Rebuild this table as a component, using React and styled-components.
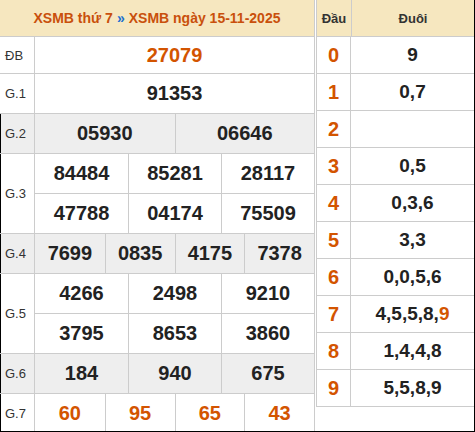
import React from "react";
import styled, { createGlobalStyle } from "styled-components";

const Global = createGlobalStyle`
  html, body { margin: 0; padding: 0; background: #fff; }
  body { font-family: "Liberation Sans", Arial, sans-serif; }
  * { box-sizing: border-box; }
`;

const ORANGE = "#d35400";
const LINE = "#cccccc";
const HEAD_BG = "#f6e7bf";

const Page = styled.div`
  display: flex;
  align-items: flex-start;
  gap: 1px;
  width: 475px;
  height: 432px;
  border-right: 1px solid #000;
  border-bottom: 1px solid #000;
  overflow: hidden;
`;

const Results = styled.div`
  width: 315px;
  display: flex;
  flex-direction: column;
  border-right: 1px solid ${LINE};
`;

const Title = styled.div`
  height: 37px;
  background: ${HEAD_BG};
  border-bottom: 1px solid ${LINE};
  display: flex;
  align-items: center;
  justify-content: center;
  font-weight: bold;
  font-size: 14px;
  color: #c9500c;
  white-space: nowrap;
`;

const Sep = styled.span`
  color: #1a6fd0;
  margin: 0 4px;
`;

const Prize = styled.div`
  display: flex;
  background: ${(p) => (p.$alt ? "#eeeeee" : "#fff")};
`;

const Label = styled.div`
  width: 35px;
  flex: none;
  display: flex;
  align-items: center;
  padding-left: 5px;
  font-size: 13px;
  color: #333;
  border-right: 1px solid ${LINE};
  border-bottom: 1px solid ${LINE};
  box-shadow: ${(p) => (p.$edge ? "inset 1px 0 0 #000" : "none")};
`;

const Lines = styled.div`
  flex: 1;
  display: flex;
  flex-direction: column;
`;

const Line = styled.div`
  display: grid;
  grid-template-columns: repeat(${(p) => p.$cols}, 1fr);
  height: ${(p) => p.$h}px;
`;

const Num = styled.div`
  display: flex;
  align-items: center;
  justify-content: center;
  font-weight: bold;
  font-size: 20px;
  color: ${(p) => (p.$hot ? ORANGE : "#222")};
  border-bottom: 1px solid ${LINE};
  & + & { border-left: 1px solid ${LINE}; }
`;

const Loto = styled.div`
  width: 158px;
  display: flex;
  flex-direction: column;
  border-left: 1px solid ${LINE};
`;

const LRow = styled.div`
  display: grid;
  grid-template-columns: 34px 1fr;
  height: 37px;
  border-bottom: 1px solid ${LINE};
  background: ${(p) => (p.$head ? HEAD_BG : "#fff")};
`;

const Head = styled.div`
  display: flex;
  align-items: center;
  justify-content: center;
  font-weight: bold;
  font-size: 13px;
  color: #333;
  & + & { border-left: 1px solid ${LINE}; }
`;

const Digit = styled.div`
  display: flex;
  align-items: center;
  justify-content: center;
  font-weight: bold;
  font-size: 20px;
  color: ${ORANGE};
  border-right: 1px solid ${LINE};
`;

const Tail = styled.div`
  display: flex;
  align-items: center;
  justify-content: center;
  font-weight: bold;
  font-size: 19px;
  color: #222;
`;

const Hot = styled.span`
  color: ${ORANGE};
`;

const prizes = [
  { label: "ĐB", rows: [["27079"]], h: 37, hot: true },
  { label: "G.1", rows: [["91353"]] },
  { label: "G.2", rows: [["05930", "06646"]], alt: true, edge: true },
  { label: "G.3", rows: [["84484", "85281", "28117"], ["47788", "04174", "75509"]], edge: true },
  { label: "G.4", rows: [["7699", "0835", "4175", "7378"]], alt: true, edge: true },
  { label: "G.5", rows: [["4266", "2498", "9210"], ["3795", "8653", "3860"]], edge: true },
  { label: "G.6", rows: [["184", "940", "675"]], alt: true, edge: true },
  { label: "G.7", rows: [["60", "95", "65", "43"]], hot: true, edge: true },
];

const loto = [
  ["0", "9"],
  ["1", "0,7"],
  ["2", ""],
  ["3", "0,5"],
  ["4", "0,3,6"],
  ["5", "3,3"],
  ["6", "0,0,5,6"],
  ["7", "4,5,5,8,", "9"],
  ["8", "1,4,4,8"],
  ["9", "5,5,8,9"],
];

export default function App() {
  return (
    <>
      <Global />
      <Page>
        <Results>
          <Title>
            XSMB thứ 7<Sep>»</Sep>XSMB ngày 15-11-2025
          </Title>
          {prizes.map((p) => (
            <Prize key={p.label} $alt={p.alt}>
              <Label $edge={p.edge}>{p.label}</Label>
              <Lines>
                {p.rows.map((r, i) => (
                  <Line key={i} $cols={r.length} $h={p.h || 40}>
                    {r.map((n, j) => (
                      <Num key={j} $hot={p.hot}>{n}</Num>
                    ))}
                  </Line>
                ))}
              </Lines>
            </Prize>
          ))}
        </Results>
        <Loto>
          <LRow $head>
            <Head>Đầu</Head>
            <Head>Đuôi</Head>
          </LRow>
          {loto.map(([d, t, h]) => (
            <LRow key={d}>
              <Digit>{d}</Digit>
              <Tail>
                {t}
                {h && <Hot>{h}</Hot>}
              </Tail>
            </LRow>
          ))}
        </Loto>
      </Page>
    </>
  );
}
